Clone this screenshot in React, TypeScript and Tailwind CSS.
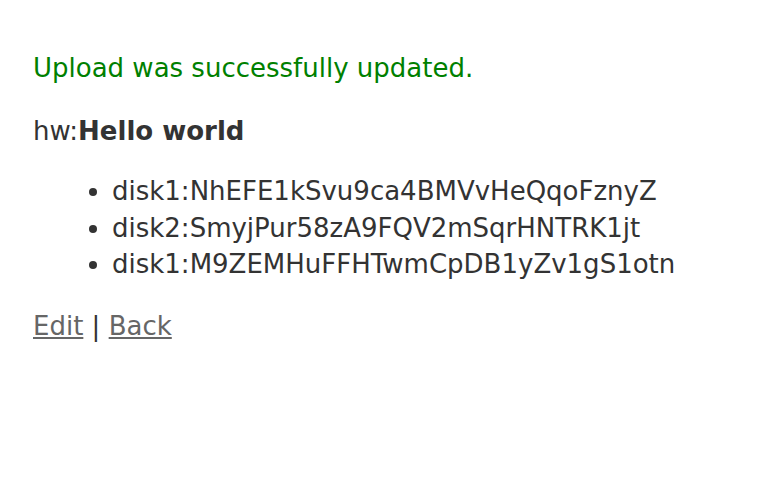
export default function App() {
  return (
    <div className="min-h-[484px] bg-white px-[33px] pt-[50px] text-[26px] leading-[36.5px] text-[#333] [font-family:'DejaVu_Sans',Verdana,sans-serif]">
      <p className="text-[#008000]">Upload was successfully updated.</p>
      <p className="mt-[26px]">
        hw:<strong className="font-bold">Hello world</strong>
      </p>
      <ul className="mt-[24px] list-disc pl-[79px]">
        <li>disk1:NhEFE1kSvu9ca4BMVvHeQqoFznyZ</li>
        <li>disk2:SmyjPur58zA9FQV2mSqrHNTRK1jt</li>
        <li>disk1:M9ZEMHuFFHTwmCpDB1yZv1gS1otn</li>
      </ul>
      <p className="mt-[25px]">
        <a href="#" className="text-[#666] underline">Edit</a> |{' '}
        <a href="#" className="text-[#666] underline">Back</a>
      </p>
    </div>
  )
}
